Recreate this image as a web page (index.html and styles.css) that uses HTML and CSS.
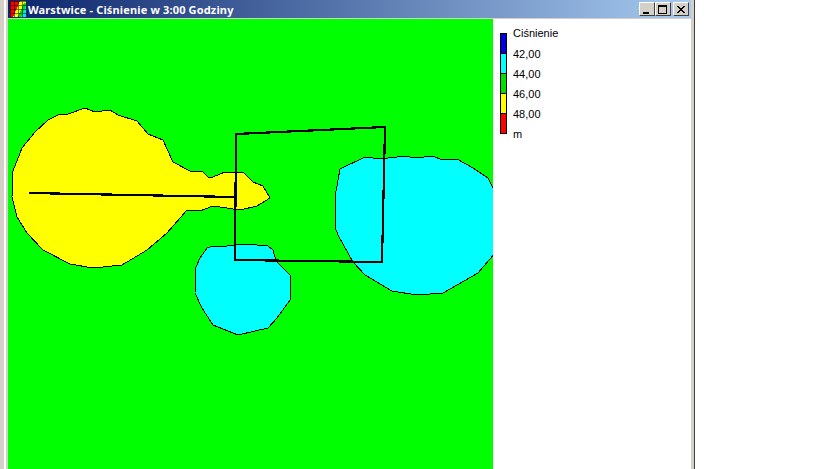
FILE: index.html
```html
<!DOCTYPE html>
<html lang="pl">
<head>
  <meta charset="UTF-8">
  <title>Warstwice - Ciśnienie w 3:00 Godziny</title>
  <link rel="stylesheet" href="styles.css">
</head>
<body>
  <div class="window">
    <div class="titlebar">
      <svg class="app-icon" width="16" height="16" viewBox="0 0 16 16" shape-rendering="crispEdges">
        <rect width="16" height="16" fill="#ff0000"/>
        <polygon points="3,16 10,0 16,0 16,16" fill="#ffff00"/>
        <polygon points="8,16 14,2 16,2 16,16" fill="#00e000"/>
        <polygon points="11,16 16,5 16,16" fill="#00e8e8"/>
        <path d="M0.5 0V16M4.5 0V16M8.5 0V16M12.5 0V16M0 0.5H16M0 4.5H16M0 8.5H16M0 12.5H16" stroke="#000" stroke-opacity="0.55" fill="none"/>
      </svg>
      <span class="title">Warstwice - Ciśnienie w 3:00 Godziny</span>
      <div class="controls">
        <div class="btn">
          <svg width="10" height="9" viewBox="0 0 10 9" shape-rendering="crispEdges"><rect x="1" y="7" width="6" height="2" fill="#000"/></svg>
        </div>
        <div class="btn">
          <svg width="10" height="9" viewBox="0 0 10 9" shape-rendering="crispEdges"><path d="M0.5 1.5H8.5V8.5H0.5Z" fill="none" stroke="#000"/><rect y="0" width="9" height="2" fill="#000"/></svg>
        </div>
        <div class="btn btn-close">
          <svg width="10" height="9" viewBox="0 0 10 9" shape-rendering="crispEdges"><path d="M1 1L8 8M8 1L1 8M2 1L9 8M9 1L2 8" fill="none" stroke="#000"/></svg>
        </div>
      </div>
    </div>
    <div class="content">
      <svg class="plot" width="485" height="450" viewBox="8 19 485 450">
        <rect x="8" y="19" width="485" height="450" fill="#00ff00"/>
        <polygon class="contour" fill="#ffff00" points="85,108 95,112 110,110 118,115 137,121 148,134 163,140 173,162 190,171 203,172 208,177 213,177 225,172 243,172 253,182 263,186 270,198 257,206 240,210 213,206 200,211 187,210 167,233 147,250 122,265 93,268 70,264 43,250 27,233 17,217 12,197 13,171 22,148 35,132 48,120 60,114 68,114"/>
        <polygon class="contour" fill="#00ffff" points="207,248 213,246 227,246 245,244 268,246 273,250 276,261 290,275 290,300 277,318 268,328 238,335 213,325 202,308 195,293 196,267 200,258"/>
        <polygon class="contour" fill="#00ffff" points="340,169 365,157 380,159 405,156 415,158 433,156 442,160 457,159 473,168 488,178 495,192 495,253 478,273 443,293 417,295 392,291 365,275 353,262 338,235 335,227 335,197"/>
        <polyline class="track" points="29,193 235,197"/>
        <polygon class="track" points="236,134 385,127 382,262 235,260"/>
      </svg>
      <div class="legend">
        <div class="scale">
          <div class="swatch swatch-blue"></div>
          <div class="swatch swatch-cyan"></div>
          <div class="swatch swatch-green"></div>
          <div class="swatch swatch-yellow"></div>
          <div class="swatch swatch-red"></div>
        </div>
        <div class="labels">
          <div class="label-head">Ciśnienie</div>
          <div>42,00</div>
          <div>44,00</div>
          <div>46,00</div>
          <div>48,00</div>
          <div>m</div>
        </div>
      </div>
    </div>
  </div>
</body>
</html>
```
FILE: styles.css
```css
html, body {
  margin: 0;
  height: 100%;
  overflow: hidden;
  background: white;
}
.window {
  width: 695px;
  height: 469px;
  box-sizing: border-box;
  display: flex;
  flex-direction: column;
  background: #d4d0c8;
  border-left: 4px solid #d4d0c8;
  border-right: 1px solid #404040;
  padding: 0 3px 0 4px;
  box-shadow: inset 2px 0 0 #ffffff;
  font-family: "Liberation Sans", Arial, sans-serif;
}
.titlebar {
  height: 18px;
  flex: none;
  display: flex;
  align-items: center;
  padding: 0 2px;
  background: linear-gradient(to right, #0a246a, #a6caf0);
}
.app-icon {
  flex: none;
}
.title {
  margin-left: 2px;
  color: white;
  font-family: "Noto Sans", "DejaVu Sans", sans-serif;
  font-size: 11px;
  font-weight: bold;
  letter-spacing: 0.15px;
  white-space: nowrap;
}
.controls {
  margin-left: auto;
  display: flex;
}
.btn {
  width: 16px;
  height: 14px;
  box-sizing: border-box;
  display: flex;
  align-items: center;
  justify-content: center;
  background: #d4d0c8;
  border: 1px solid;
  border-color: #ffffff #404040 #404040 #ffffff;
}
.btn-close {
  margin-left: 2px;
}
.content {
  flex: 1;
  min-height: 0;
  margin-top: 1px;
  display: flex;
  background: white;
}
.plot {
  display: block;
  flex: none;
}
.contour {
  stroke: #000;
  stroke-width: 1;
  shape-rendering: crispEdges;
}
.track {
  fill: none;
  stroke: #000;
  stroke-width: 2.2;
  shape-rendering: crispEdges;
}
.legend {
  display: flex;
  padding: 14px 0 0 7px;
  align-items: flex-start;
  font-size: 11px;
  color: #000;
}
.scale {
  width: 7px;
  box-sizing: border-box;
  border: 1px solid #000;
  border-bottom: none;
}
.swatch {
  height: 19px;
  border-bottom: 1px solid #000;
}
.swatch-blue { background: #0000e0; }
.swatch-cyan { background: #00ffff; }
.swatch-green { background: #00e000; }
.swatch-yellow { background: #ffff00; }
.swatch-red { background: #ff0000; }
.labels {
  margin: -9px 0 0 6px;
  line-height: 20px;
}
.label-head {
  margin-top: -1px;
  margin-bottom: 1px;
}
```
